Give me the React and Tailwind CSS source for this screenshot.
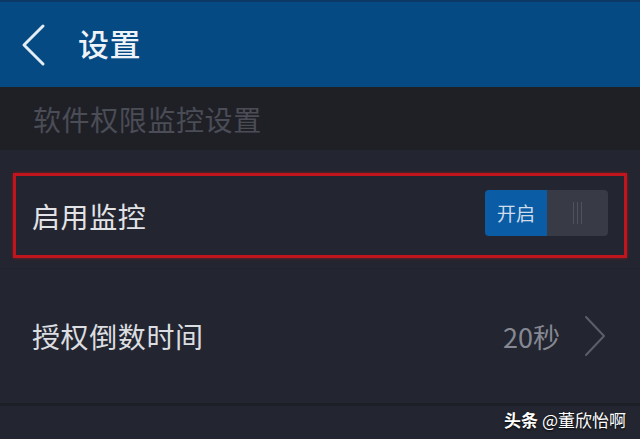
/**
 * App.jsx — Settings screen: monitor permissions.
 */

const FONT = { fontFamily: '"Noto Sans CJK SC", "Noto Sans", sans-serif' };

export default function App() {
  return (
    <div className="w-[640px] h-[439px] overflow-hidden bg-[#232630] relative" style={FONT}>
      {/* Header */}
      <header className="h-[87px] bg-[#064a84] border-t-[2px] border-[#0b3865] flex items-center shadow-[0_1px_2px_rgba(0,0,0,0.5)]">
        <svg className="ml-[20px] w-[26px] h-[44px]" viewBox="0 0 26 44" fill="none" stroke="#e4ecf4" strokeWidth="3" strokeLinecap="round" strokeLinejoin="round">
          <polyline points="23 3 4 22 23 41" />
        </svg>
        <h1 className="ml-[32px] -mt-[4px] text-[31px] font-medium text-[#eef3f8] leading-none tracking-[0.5px]">设置</h1>
      </header>

      {/* Section label */}
      <div className="h-[63px] bg-[#1f2026] flex items-center pl-[33px]">
        <span className="text-[28px] text-[#4a4c56] tracking-[0.6px] leading-none">软件权限监控设置</span>
      </div>

      {/* Enable monitor row (highlighted) */}
      <div className="pt-[23px] px-[13px]">
        <div className="h-[85px] border-[3px] border-[#c0151c] shadow-[0_0_3px_rgba(200,20,28,0.6)] flex items-center justify-between pl-[16px] pr-[16px]">
          <span className="text-[28px] text-[#e2e3e6] tracking-[0.6px] leading-none">启用监控</span>
          <div className="flex w-[123px] h-[46px] -mt-[6px] rounded-[4px] overflow-hidden">
            <div className="w-[62px] bg-[#0a5da5] flex items-center justify-center">
              <span className="text-[19px] text-[#cfdcec] leading-none">开启</span>
            </div>
            <div className="flex-1 bg-[#383a46] flex items-center justify-center gap-[3px]">
              <span className="w-[1px] h-[22px] bg-[#50525e]" />
              <span className="w-[1px] h-[22px] bg-[#50525e]" />
              <span className="w-[1px] h-[22px] bg-[#50525e]" />
            </div>
          </div>
        </div>
      </div>

      <div className="mt-[10px] h-[1px] bg-[#20232b]" />

      {/* Countdown row */}
      <div className="h-[134px] flex items-center justify-between pl-[32px] pr-[33px]">
        <span className="text-[28px] text-[#dcdde0] tracking-[0.6px] leading-none">授权倒数时间</span>
        <div className="flex items-center">
          <span className="text-[27px] text-[#868993] leading-none">20秒</span>
          <svg className="ml-[23px] w-[24px] h-[42px]" viewBox="0 0 24 42" fill="none" stroke="#5c5f69" strokeWidth="2" strokeLinecap="round" strokeLinejoin="round">
            <polyline points="3 2 21 21 3 40" />
          </svg>
        </div>
      </div>

      <div className="h-[3px] bg-[#1d1f26]" />

      {/* Watermark */}
      <div className="absolute right-[14px] bottom-[11px] text-[17px] font-bold text-white leading-none [text-shadow:0_1px_2px_rgba(0,0,0,0.9)]">
        头条 <span className="font-normal">@董欣怡啊</span>
      </div>
    </div>
  );
}
